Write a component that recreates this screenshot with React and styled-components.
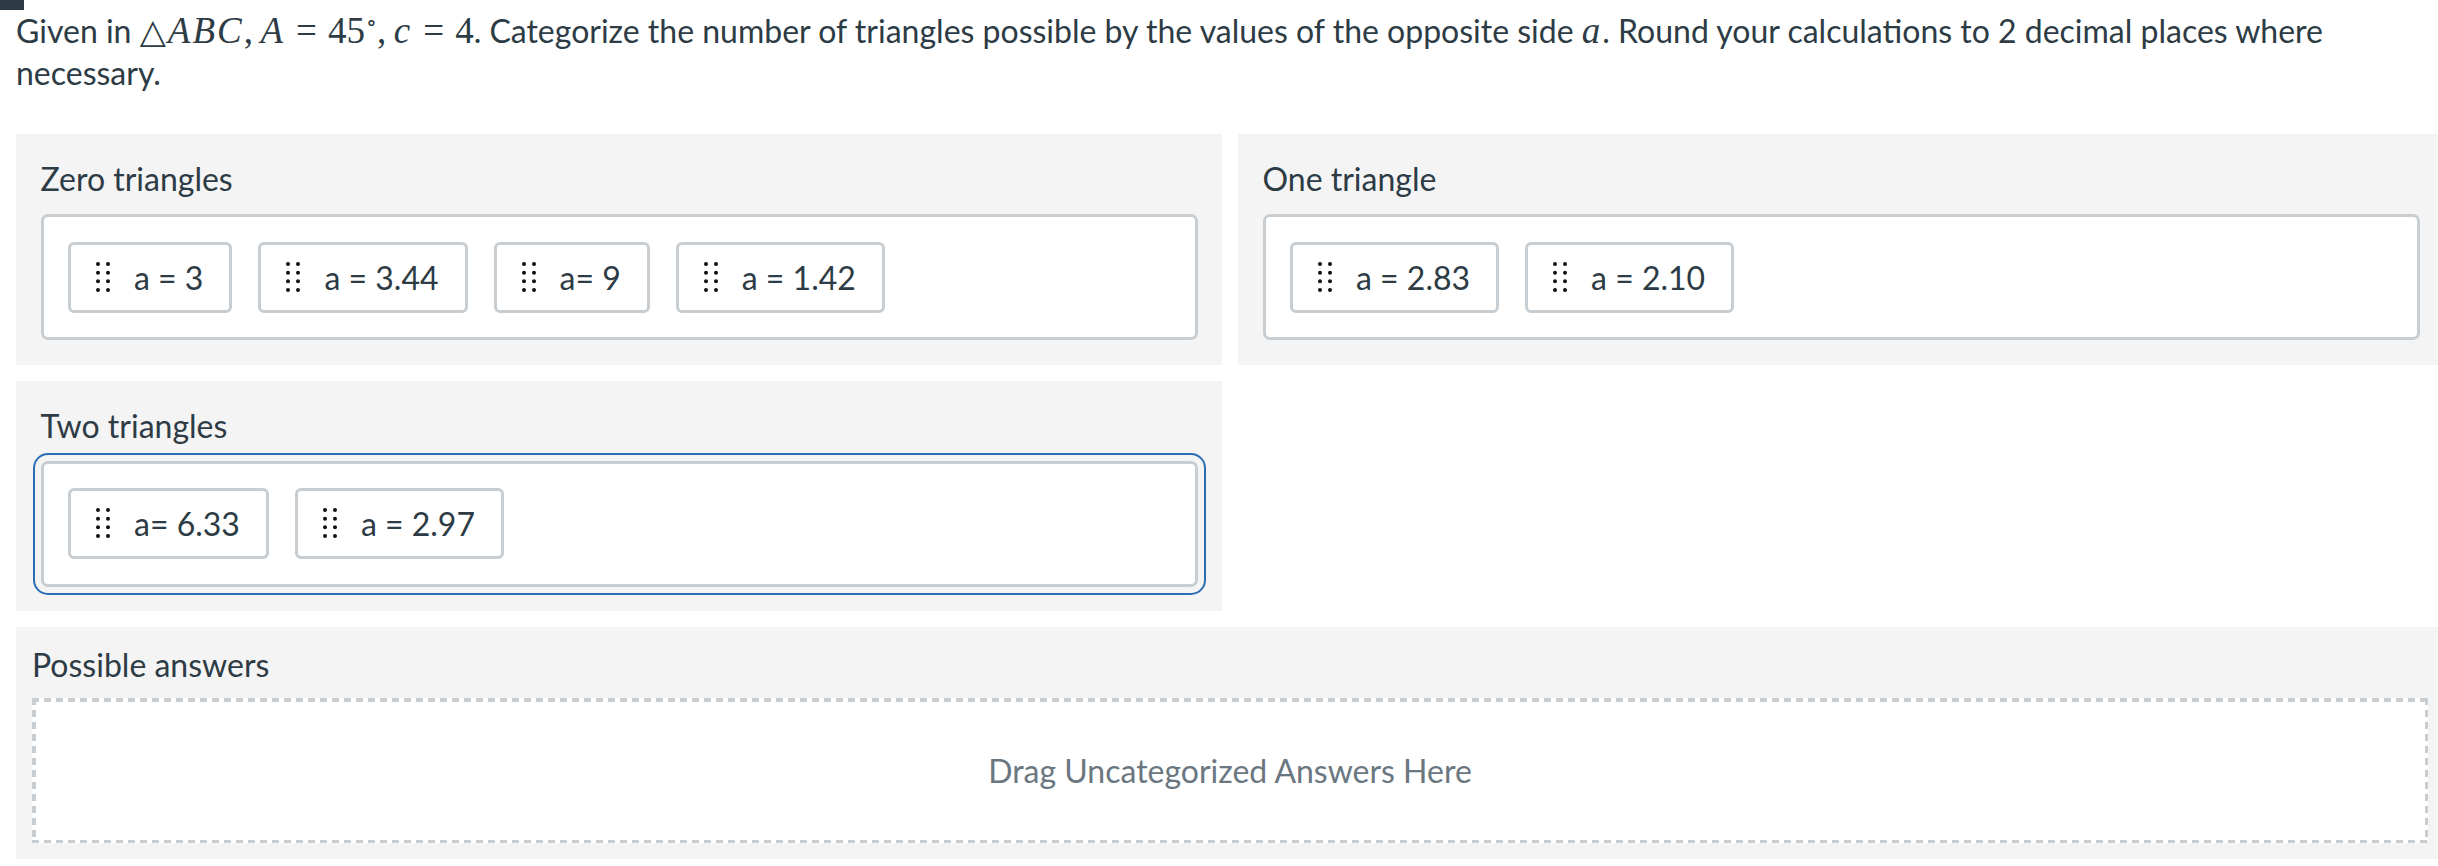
import React from "react";
import styled, { createGlobalStyle, css } from "styled-components";

const GlobalStyle = createGlobalStyle`
  html, body {
    margin: 0;
    padding: 0;
    background: #fff;
    overflow: hidden;
  }
  body {
    font-family: Lato, "Noto Sans", sans-serif;
    color: #2d3b45;
  }
`;

const Marker = styled.div`
  width: 24px;
  height: 10px;
  background: #2d3b45;
`;

const Content = styled.div`
  width: 2428px;
  padding-left: 16px;
`;

const Question = styled.p`
  margin: 0 0 40px;
  font-size: 32px;
  line-height: 42px;
`;

const MathText = styled.span`
  font-family: "Liberation Serif", "DejaVu Serif", serif;
  font-size: 37px;
  line-height: 1;
  white-space: nowrap;
`;

const Var = styled.i`
  font-style: italic;
  letter-spacing: 2px;
`;

const Rel = styled.span`
  margin: 0 0.3em;
`;

const Tri = styled.span`
  font-family: "DejaVu Serif", serif;
  font-size: 34px;
  margin-right: 2px;
`;

const Deg = styled.sup`
  font-size: 0.6em;
  line-height: 0;
  margin-left: 1px;
`;

const Grid = styled.div`
  display: grid;
  grid-template-columns: 1206px 1206px;
  gap: 16px;
  margin-bottom: 16px;
`;

const Panel = styled.section`
  background: #f4f4f4;
  padding: ${(p) => (p.$compact ? "17px 16px 16px" : "24px 24.5px 24.5px")};
`;

const Title = styled.div`
  font-size: 32px;
  line-height: 42px;
  margin-bottom: ${(p) => (p.$compact ? "12px" : "14px")};
`;

const DropZone = styled.div`
  display: flex;
  flex-wrap: wrap;
  gap: 26px;
  background: #fff;
  border: 3.5px solid #c7cdd1;
  border-radius: 7px;
  padding: 24.5px;
  ${(p) =>
    p.$focused &&
    css`
      outline: 2px solid #2c6db3;
      outline-offset: 6px;
    `}
`;

const Chip = styled.div`
  display: inline-flex;
  align-items: center;
  gap: 24px;
  box-sizing: border-box;
  height: 71px;
  padding: 0 26px 0 25px;
  background: #fff;
  border: 3.5px solid #c7cdd1;
  border-radius: 6px;
  font-size: 32px;
  color: #2d3b45;
  white-space: pre;
`;

const dash = "#c7cdd1";

const UncategorizedBox = styled.div`
  box-sizing: border-box;
  height: 145px;
  display: flex;
  align-items: center;
  justify-content: center;
  font-size: 32px;
  color: #6b7780;
  background:
    linear-gradient(to right, ${dash} 62%, transparent 62%) top left / 12px 3.5px repeat-x,
    linear-gradient(to right, ${dash} 62%, transparent 62%) bottom left / 12px 3.5px repeat-x,
    linear-gradient(to bottom, ${dash} 62%, transparent 62%) top left / 3.5px 12px repeat-y,
    linear-gradient(to bottom, ${dash} 62%, transparent 62%) top right / 3.5px 12px repeat-y,
    #fff;
`;

const Grip = () => (
  <svg width="14" height="31" viewBox="0 0 14 31" aria-hidden="true">
    {[2, 10.7, 19.3, 28].map((y) =>
      [2, 12].map((x) => <circle key={`${x}-${y}`} cx={x} cy={y} r="2" fill="#111" />)
    )}
  </svg>
);

const Answer = ({ label }) => (
  <Chip>
    <Grip />
    <span>{label}</span>
  </Chip>
);

const categories = [
  { title: "Zero triangles", items: ["a = 3", "a = 3.44", "a= 9", "a = 1.42"] },
  { title: "One triangle", items: ["a = 2.83", "a = 2.10"] },
  { title: "Two triangles", items: ["a= 6.33", "a = 2.97"], focused: true },
];

export default function App() {
  return (
    <>
      <GlobalStyle />
      <Marker />
      <Content>
        <Question>
          Given in{" "}
          <MathText>
            <Tri>△</Tri>
            <Var>ABC</Var>,&thinsp;<Var>A</Var>
            <Rel>=</Rel>45<Deg>∘</Deg>
          </MathText>
          <MathText>
            ,&thinsp;<Var>c</Var>
            <Rel>=</Rel>4
          </MathText>
          . Categorize the number of triangles possible by the values of the opposite side{" "}
          <MathText>
            <Var>a</Var>
          </MathText>
          . Round your calculations to 2 decimal places where necessary.
        </Question>

        <Grid>
          {categories.map((cat) => (
            <Panel key={cat.title}>
              <Title>{cat.title}</Title>
              <DropZone $focused={cat.focused}>
                {cat.items.map((item) => (
                  <Answer key={item} label={item} />
                ))}
              </DropZone>
            </Panel>
          ))}
        </Grid>

        <Panel $compact>
          <Title $compact>Possible answers</Title>
          <UncategorizedBox>Drag Uncategorized Answers Here</UncategorizedBox>
        </Panel>
      </Content>
    </>
  );
}
